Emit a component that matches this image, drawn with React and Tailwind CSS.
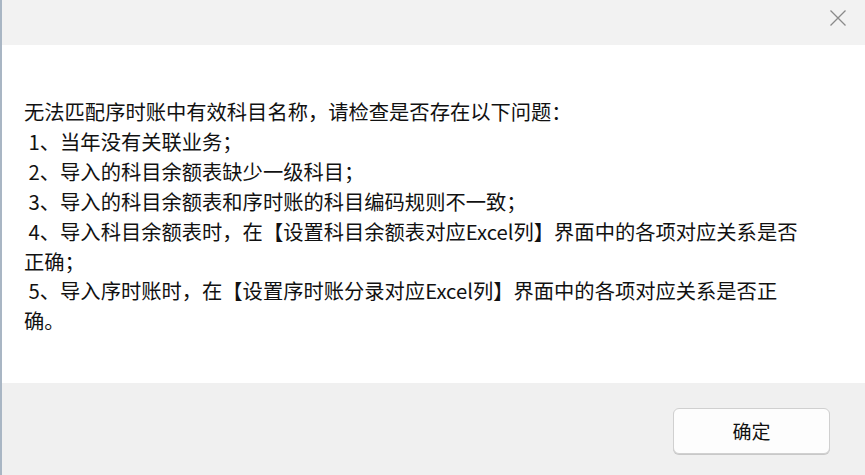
export default function App() {
  const font = { fontFamily: '"Microsoft YaHei", "Noto Sans CJK SC", "Noto Sans", sans-serif' };
  return (
    <div className="w-[865px] h-[475px] flex flex-col bg-white border-l-2 border-[#a9b6c4] overflow-hidden" style={font}>
      <div className="h-[45px] bg-[#f2f2f2] flex justify-end items-start shrink-0">
        <div className="w-[46px] h-[36px] flex items-center justify-center mr-[4px]">
          <svg width="18" height="18" viewBox="0 0 18 18">
            <path d="M1.5 1.5 L16.5 16.5 M16.5 1.5 L1.5 16.5" stroke="#8a8a8a" strokeWidth="1.3" fill="none" />
          </svg>
        </div>
      </div>
      <div className="flex-1 bg-white pl-[22px] pt-[52px] text-[20.3px] leading-[29.9px] text-[#111111]">
        <div>无法匹配序时账中有效科目名称，请检查是否存在以下问题：</div>
        <div>&nbsp;1、当年没有关联业务；</div>
        <div>&nbsp;2、导入的科目余额表缺少一级科目；</div>
        <div>&nbsp;3、导入的科目余额表和序时账的科目编码规则不一致；</div>
        <div>&nbsp;4、导入科目余额表时，在【设置科目余额表对应Excel列】界面中的各项对应关系是否</div>
        <div>正确；</div>
        <div>&nbsp;5、导入序时账时，在【设置序时账分录对应Excel列】界面中的各项对应关系是否正</div>
        <div>确。</div>
      </div>
      <div className="h-[92px] bg-[#f0f0f0] shrink-0 flex justify-end pt-[25px] pr-[35px]">
        <button className="w-[157px] h-[46px] rounded-[6px] border border-[#d0d0d0] bg-[#fdfdfd] text-[19px] text-[#111111] shadow-[0_1px_0_#c8c8c8]" style={font}>
          确定
        </button>
      </div>
    </div>
  );
}
